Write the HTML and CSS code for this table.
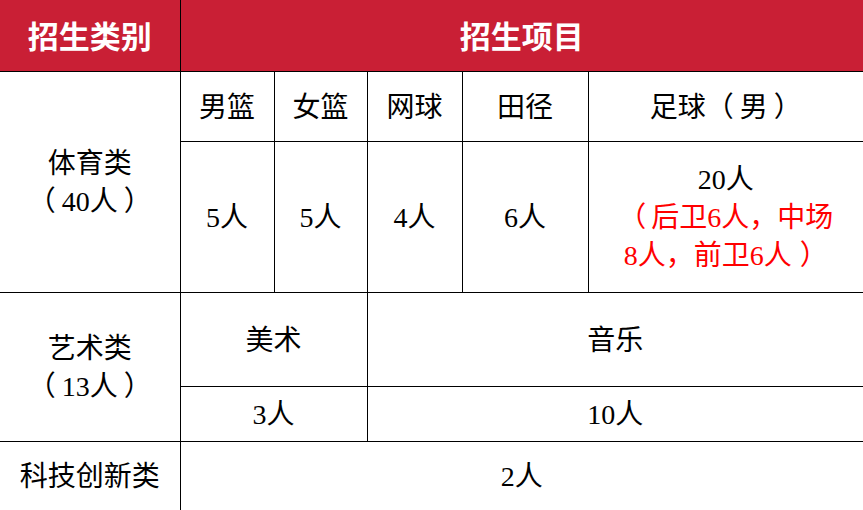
FILE: index.html
```html
<!DOCTYPE html>
<html lang="zh">
<head>
<meta charset="utf-8">
<link rel="stylesheet" href="styles.css">
</head>
<body>
<table class="grid">
  <colgroup>
    <col class="c1"><col class="c2"><col class="c3"><col class="c4"><col class="c5"><col class="c6">
  </colgroup>
  <tr class="r-head">
    <th>招生类别</th>
    <th colspan="5">招生项目</th>
  </tr>
  <tr class="r1">
    <td rowspan="2" class="cat">体育类<br>（<span class="pin">40人</span>）</td>
    <td>男篮</td>
    <td>女篮</td>
    <td>网球</td>
    <td>田径</td>
    <td>足球（<span class="pin">男</span>）</td>
  </tr>
  <tr class="r2">
    <td>5人</td>
    <td>5人</td>
    <td>4人</td>
    <td>6人</td>
    <td class="multi">20人<br><span class="red">（<span class="pin-l">后卫6人，中场</span><br>8人，前卫6人<span class="pin-r"></span>）</span></td>
  </tr>
  <tr class="r3">
    <td rowspan="2" class="cat">艺术类<br>（<span class="pin">13人</span>）</td>
    <td colspan="2">美术</td>
    <td colspan="3">音乐</td>
  </tr>
  <tr class="r4">
    <td colspan="2">3人</td>
    <td colspan="3">10人</td>
  </tr>
  <tr class="r5">
    <td>科技创新类</td>
    <td colspan="5">2人</td>
  </tr>
</table>
</body>
</html>
```
FILE: styles.css
```css
html, body {
  margin: 0;
  padding: 0;
  background: #ffffff;
}
.grid {
  width: 863px;
  table-layout: fixed;
  border-collapse: collapse;
  border: hidden;
  font-family: "Liberation Serif", "Noto Sans CJK SC", serif;
  font-size: 28px;
  color: #000;
  text-spacing-trim: space-all;
}
.c1 { width: 180px; }
.c2 { width: 94px; }
.c3 { width: 93px; }
.c4 { width: 95px; }
.c5 { width: 126px; }
.c6 { width: 275px; }
.grid th, .grid td {
  border: 1px solid #000;
  padding: 0;
  text-align: center;
  vertical-align: middle;
  line-height: 38px;
}
.grid td {
  padding-top: 3px;
}
.grid th {
  background: #c91f35;
  color: #fff;
  font-family: "Noto Sans CJK SC", sans-serif;
  font-weight: 700;
  font-size: 31px;
}
.r-head { height: 71px; }
.r1 { height: 70px; }
.r2 { height: 151px; }
.r3 { height: 94px; }
.r4 { height: 55px; }
.r5 { height: 69px; }
.multi { line-height: 36px; }
.red { color: #ff0000; }
.pin { padding: 0 6px; }
.pin-l { padding-left: 5px; }
.pin-r { padding-right: 8px; }
```
